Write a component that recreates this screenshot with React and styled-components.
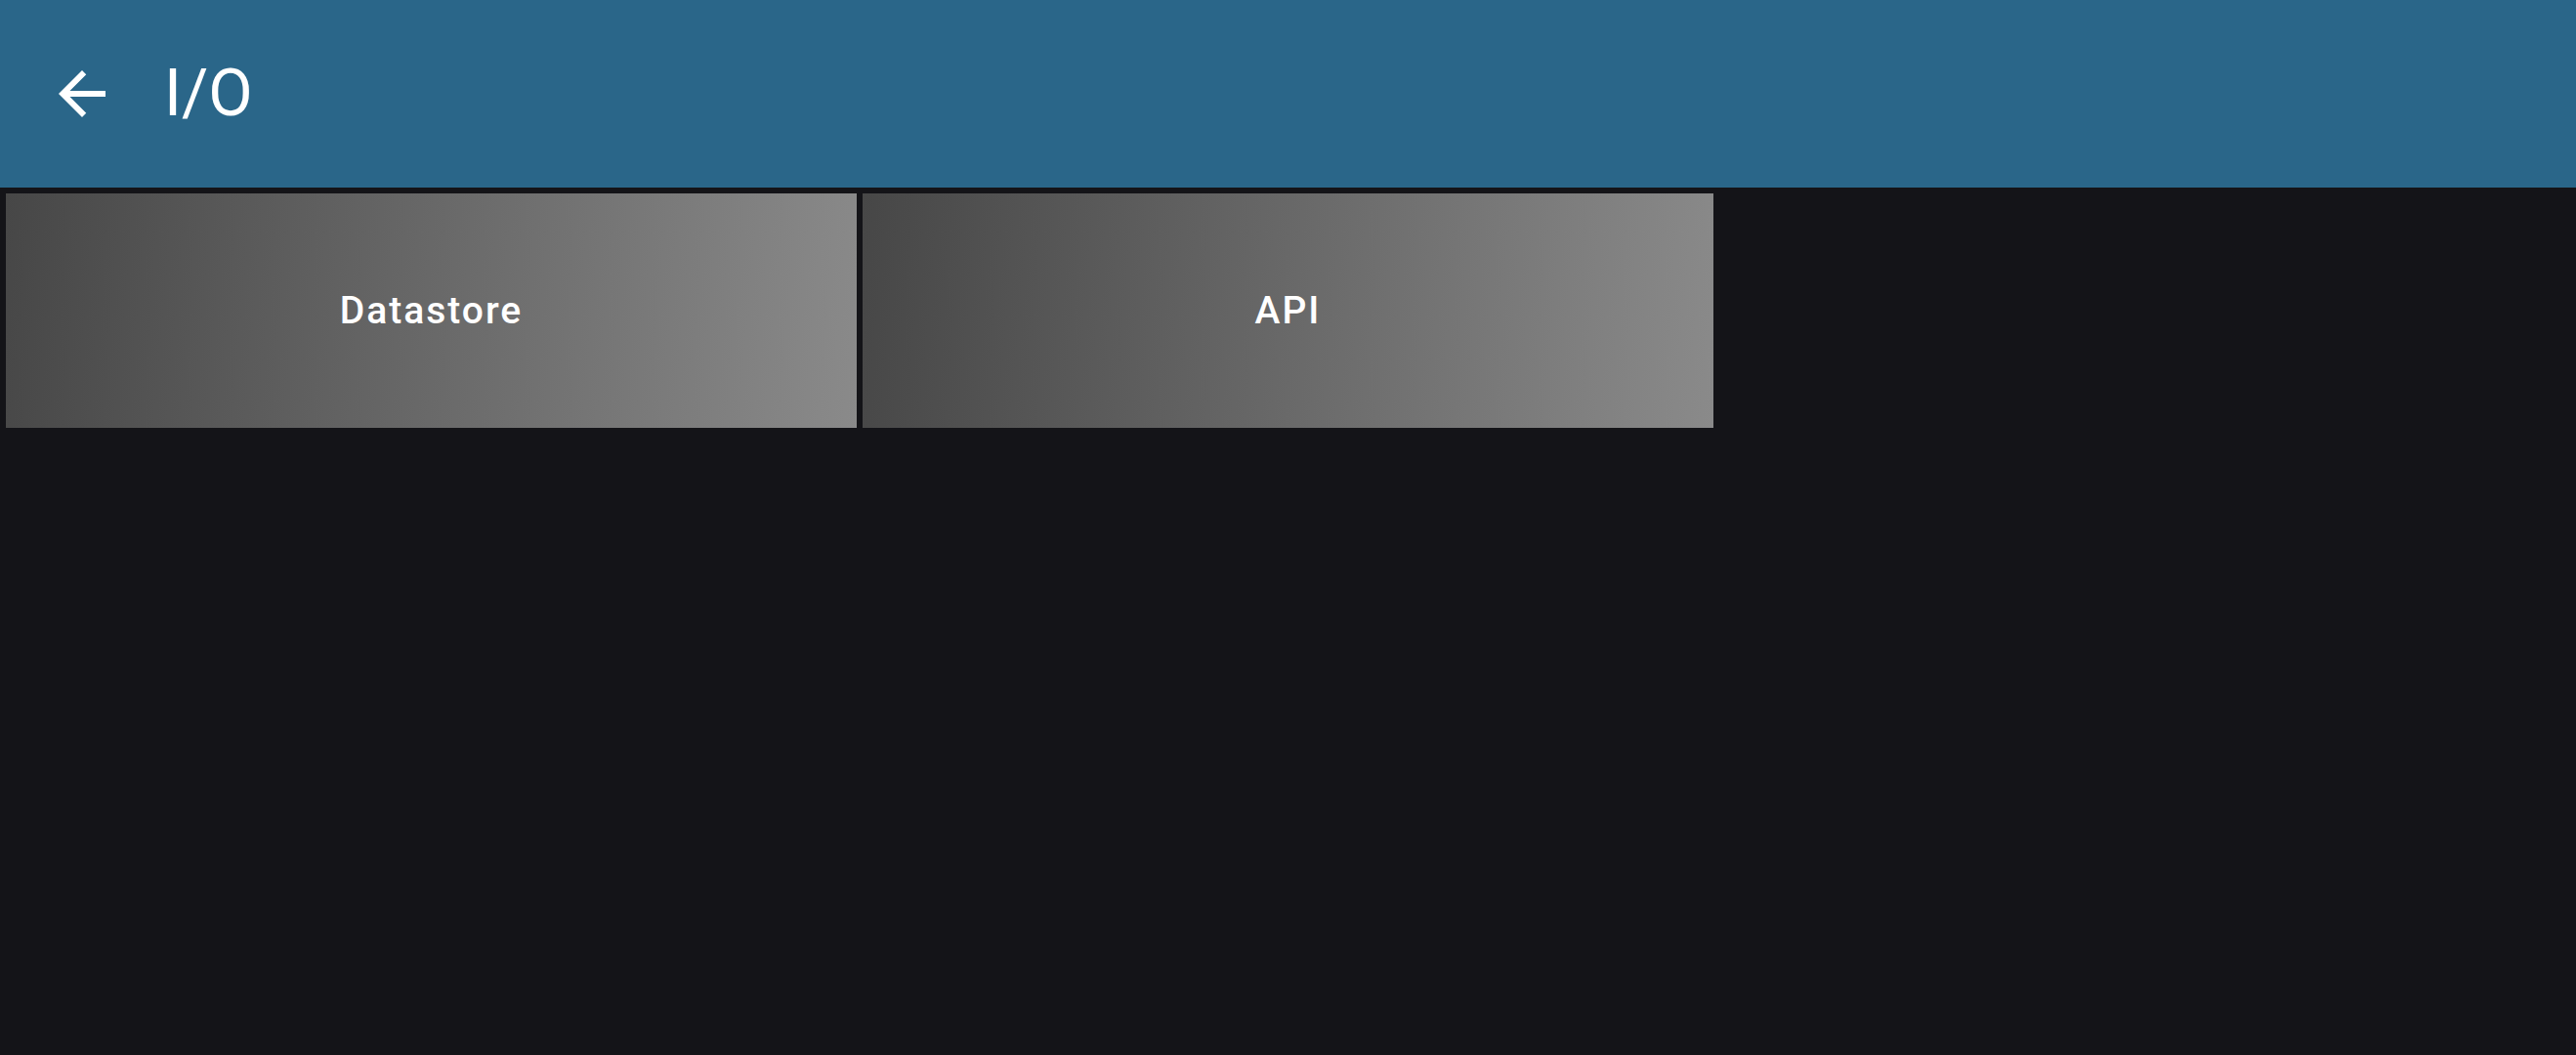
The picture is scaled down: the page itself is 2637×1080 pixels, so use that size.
import React from 'react';
import styled, { createGlobalStyle } from 'styled-components';

const GlobalStyle = createGlobalStyle`
  html, body {
    margin: 0;
    padding: 0;
    background: #141418;
    font-family: Roboto, "Noto Sans", sans-serif;
  }
`;

const Page = styled.div`
  min-height: 100vh;
  background: #141418;
`;

const AppBar = styled.header`
  height: 192px;
  background: #2a6689;
  display: flex;
  align-items: center;
  padding-left: 48px;
  color: #fff;
`;

const BackButton = styled.button`
  width: 72px;
  height: 72px;
  padding: 0;
  border: none;
  background: transparent;
  color: #fff;
  display: flex;
  align-items: center;
  justify-content: center;
  cursor: pointer;
`;

const Title = styled.h1`
  margin: 0 0 0 48px;
  font-size: 66px;
  font-weight: 400;
  line-height: 1;
`;

const Grid = styled.div`
  display: grid;
  grid-template-columns: repeat(3, 1fr);
  gap: 6px;
  padding: 6px;
`;

const Tile = styled.button`
  height: 240px;
  border: none;
  padding: 0;
  background: linear-gradient(95deg, #474747 0%, #8a8a8a 100%);
  color: #fff;
  font-family: Roboto, "Noto Sans", sans-serif;
  font-size: 39px;
  font-weight: 500;
  letter-spacing: 2px;
  display: flex;
  align-items: center;
  justify-content: center;
  cursor: pointer;
`;

const ArrowBack = () => (
  <svg width="72" height="72" viewBox="0 0 24 24" fill="currentColor">
    <path d="M20 11H7.83l5.59-5.59L12 4l-8 8 8 8 1.41-1.41L7.83 13H20v-2z" />
  </svg>
);

const items = ['Datastore', 'API'];

const App = () => (
  <Page>
    <GlobalStyle />
    <AppBar>
      <BackButton aria-label="Back">
        <ArrowBack />
      </BackButton>
      <Title>I/O</Title>
    </AppBar>
    <Grid>
      {items.map(name => (
        <Tile key={name}>{name}</Tile>
      ))}
    </Grid>
  </Page>
);

export default App;
